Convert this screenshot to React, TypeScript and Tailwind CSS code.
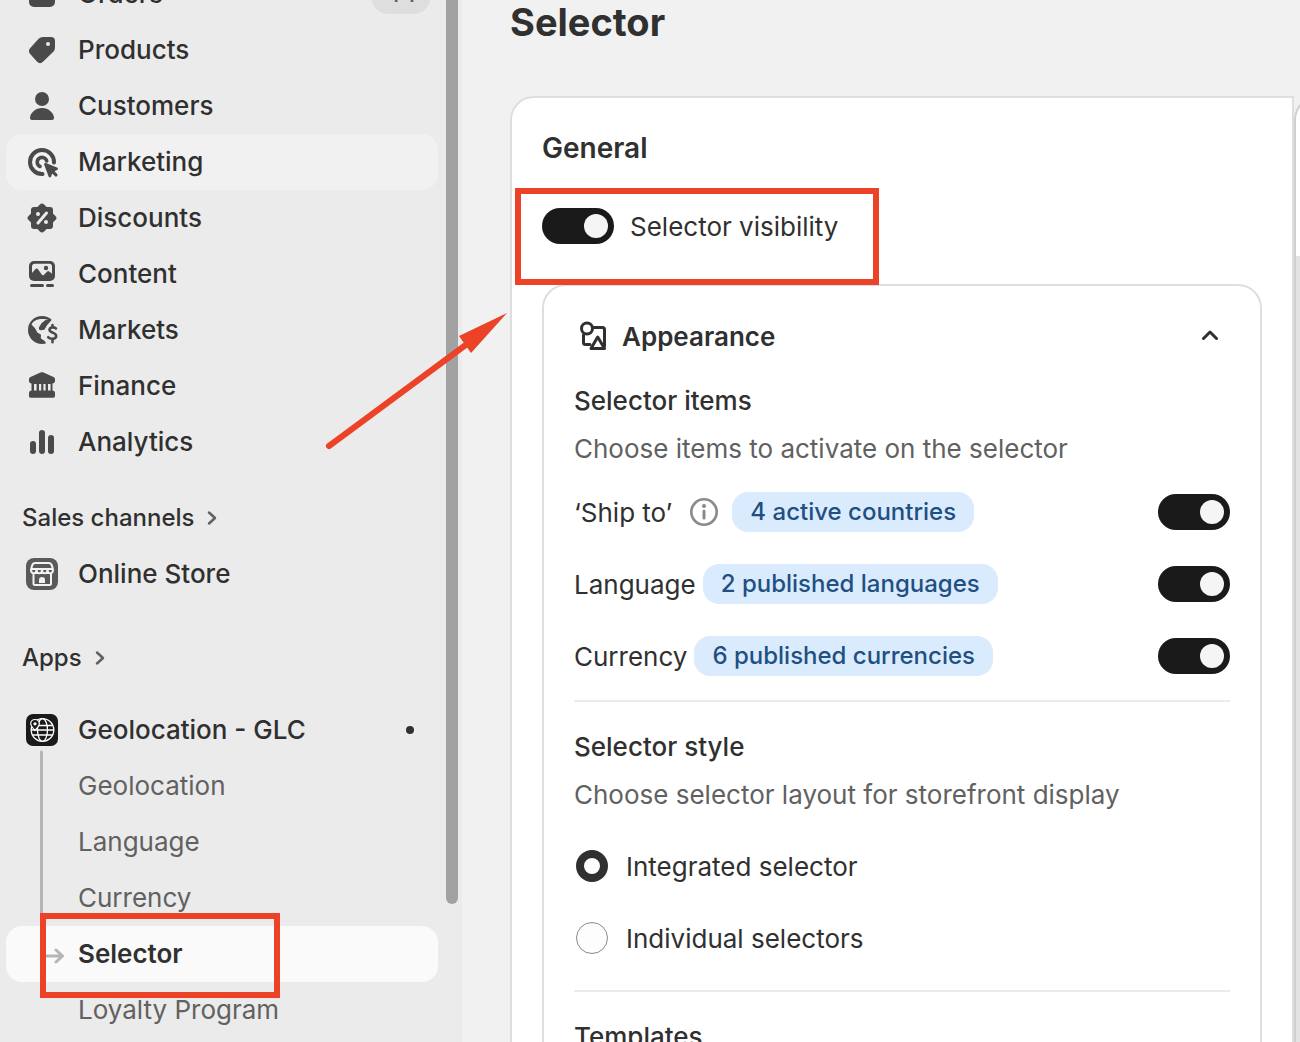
import { useState, type ReactNode } from "react";
import clsx from "clsx";

const icons: Record<string, ReactNode> = {
  orders: <rect x="7" y="7" width="26" height="26" rx="5" />,
  products: (
    <>
      <path d="M21 7h8a4 4 0 0 1 4 4v6.500c0 1.800-.7 3.400-2 4.600L21 31.700a4.200 4.200 0 0 1-5.900 0L8.200 24a4.200 4.200 0 0 1 .1-6l8.300-9.200A6.500 6.500 0 0 1 21 7Z" />
      <circle cx="26" cy="14" r="2" className="fill-[#ebebeb]" />
    </>
  ),
  customers: (
    <>
      <circle cx="20" cy="13" r="7" />
      <path d="M8 32c0-5 5.500-10 12-10s12 5 12 10c0 1.300-.8 2-2 2H10c-1.200 0-2-.7-2-2Z" />
    </>
  ),
  marketing: (
    <>
      <path d="M20.500 32A12 12 0 1 1 32 20.500" fill="none" stroke="currentColor" strokeWidth="4" strokeLinecap="round" />
      <path d="M18 24.500A4.800 4.800 0 1 1 24.700 19" fill="none" stroke="currentColor" strokeWidth="3.600" strokeLinecap="round" />
      <path d="M23.800 21 35 25.600c1.300.5 1.300 2 .1 2.500l-2.600 1.200 2.600 2.600a1.500 1.500 0 0 1-2.200 2.200l-2.700-2.600-1.100 3c-.5 1.400-2 1.400-2.500 0l-4.400-11.700c-.5-1.200.4-2.300 1.600-1.800Z" />
    </>
  ),
  discounts: (
    <>
      <rect x="9" y="9" width="22" height="22" rx="3" />
      <rect x="9" y="9" width="22" height="22" rx="3" transform="rotate(45 20 20)" />
      <path d="m16 25 8.500-10" className="stroke-[#ebebeb]" strokeWidth="3" strokeLinecap="round" />
      <circle cx="16" cy="16" r="2" className="fill-[#ebebeb]" />
      <circle cx="24" cy="24" r="2" className="fill-[#ebebeb]" />
    </>
  ),
  content: (
    <>
      <rect x="7" y="7" width="26" height="20" rx="5" />
      <path d="M10 12.500c0-1.600 1-2.800 2.700-2.800h14.600c1.700 0 2.700 1.200 2.700 2.800v7.200l-2.400-1.900c-.8-.6-1.800-.6-2.600 0L21.800 21c-.9.600-1.500.4-2.100-.4l-3.500-5.200c-.8-1.200-2.200-1.200-3.100 0L10 19Z" className="fill-[#ebebeb]" />
      <circle cx="24" cy="14" r="2.200" />
      <rect x="8" y="30" width="14" height="3" rx="1.500" />
      <rect x="24" y="30" width="8" height="3" rx="1.500" />
    </>
  ),
  markets: (
    <>
      <circle cx="20" cy="20" r="14" />
      <path d="M9.500 14.500C11 11.200 15 9 19.500 9c2.600-.2 5 .2 6.500 1l-6 3.500-3 4c-.5 1.500.5 3 2.200 2.700l3.300-.7 2.500-4.500L30 9.500 38 15l-2 20H23.500c.8-1.500.2-3.500-1.500-4.500l-3-2c-.8-1 .8-3-.5-4.200l-3-1.600-2.500-4.500Z" className="fill-[#ebebeb]" />
      <path d="M23.500 10 29 10.500l-4.500 5-2.500 4h-3.500c-1.400-.3-1.800-1.500-1-2.800l2-3.500Z" />
      <path d="M34 18.500c-1-1.500-6.500-1.700-6.500 1.300 0 3.200 6.700 2.500 6.700 6.200 0 3.400-6.200 3.600-8 1.200M30.500 15v2.500M30.500 29.500v2.700" fill="none" stroke="currentColor" strokeWidth="2.600" strokeLinecap="round" />
    </>
  ),
  finance: (
    <>
      <path d="M18.500 6.500c1-.5 2-.5 3 0l10 4.600c1 .5 1.500 1.200 1.500 2.200V15c0 1.500-1 2.500-2.500 2.500v7c1.500 0 2.500 1 2.500 2.500v3c0 1-.7 1.700-1.700 1.700H8.700c-1 0-1.700-.7-1.700-1.700v-3c0-1.500 1-2.500 2.500-2.500v-7C8 17.500 7 16.500 7 15v-1.700c0-1 .5-1.700 1.500-2.200Z" />
      <path d="M12 18h2.600v6.500H12zM17 18h2.200v6.500H17zM21.400 18h2.200v6.500h-2.200zM26 18h2.600v6.500H26z" className="fill-[#ebebeb]" />
    </>
  ),
  analytics: (
    <>
      <rect x="8" y="19" width="6" height="13" rx="3" />
      <rect x="17" y="8" width="6" height="24" rx="3" />
      <rect x="26" y="13" width="6" height="19" rx="3" />
    </>
  ),
  store: (
    <>
      <rect x="4" y="4" width="32" height="32" rx="8" className="fill-[#5a5a5a]" />
      <g fill="none" className="stroke-[#f3f3f3]" strokeWidth="2" strokeLinejoin="round">
        <path d="M13 9h14c1.500 0 2.300.8 2.800 2.200L31 15.500c0 5-5.500 5-5.500 0 0 5-5.500 5-5.500 0 0 5-5.500 5-5.500 0 0 5-5.500 5-5.500 0l1.200-4.300C10.700 9.800 11.500 9 13 9ZM10 15h21M11.500 20v9.500c0 1 .7 1.500 1.500 1.500h14.500c1 0 1.500-.5 1.500-1.500V20" />
      </g>
      <path d="M17 31v-5.500c0-3.300 6-3.300 6 0V31Z" className="fill-[#f3f3f3]" />
      <path d="M14 29.500h12" className="stroke-[#5a5a5a]" strokeWidth="1" />
    </>
  ),
  glc: (
    <>
      <rect x="4" y="4" width="32" height="32" rx="7" className="fill-[#1a1a1a]" />
      <g fill="none" stroke="#fff" strokeWidth="1.300">
        <circle cx="20.500" cy="20" r="11.300" />
        <ellipse cx="20.500" cy="20" rx="5" ry="11.300" />
        <path d="M10.500 15.500h20M10.500 25h20M9 20h23" />
      </g>
      <path d="M13 9.500a4.300 4.300 0 0 1 4.300 4.300c0 2.600-2.300 4.200-4.300 6.700-2-2.500-4.300-4.100-4.300-6.700A4.300 4.300 0 0 1 13 9.500Z" className="fill-[#1a1a1a]" stroke="#fff" strokeWidth="1.200" />
      <circle cx="13" cy="13.800" r="1.600" fill="#fff" />
    </>
  ),
};

const mainItems = [
  { icon: "orders", label: "Orders", count: 44 },
  { icon: "products", label: "Products" },
  { icon: "customers", label: "Customers" },
  { icon: "marketing", label: "Marketing", hovered: true },
  { icon: "discounts", label: "Discounts" },
  { icon: "content", label: "Content" },
  { icon: "markets", label: "Markets" },
  { icon: "finance", label: "Finance" },
  { icon: "analytics", label: "Analytics" },
];

const appItems = ["Geolocation", "Language", "Currency", "Selector", "Loyalty Program"];

interface NavItemProps {
  icon: string;
  label: string;
  count?: number;
  hovered?: boolean;
  children?: ReactNode;
}

function NavItem({ icon, label, count, hovered = false, children }: NavItemProps) {
  return (
    <a
      href="#"
      className={clsx("flex h-14 items-center gap-4 rounded-2xl pl-4 font-medium", hovered && "bg-[#f1f1f1]")}
    >
      <svg viewBox="0 0 40 40" className="size-10 shrink-0 fill-current text-[#4a4a4a]" aria-hidden="true">
        {icons[icon]}
      </svg>
      <span className="flex-1">{label}</span>
      {count && (
        <span className="mr-2 flex h-10 w-[58px] items-center justify-center rounded-2xl bg-[#dedede] text-2xl text-[#616161]">
          {count}
        </span>
      )}
      {children}
    </a>
  );
}

function SectionLink({ label }: { label: string }) {
  return (
    <a href="#" className="flex h-14 items-center gap-3 pl-4 text-2xl font-medium">
      {label}
      <svg viewBox="0 0 12 16" className="h-4 w-3" fill="none" stroke="#616161" strokeWidth="2.500" strokeLinecap="round" strokeLinejoin="round" aria-hidden="true">
        <path d="m3 2.500 6 5.500-6 5.500" />
      </svg>
    </a>
  );
}

function Sidebar() {
  return (
    <aside className="flex w-[462px] shrink-0 items-start gap-2 bg-[#ebebeb] pr-1 pl-1.5">
      <nav className="-mt-[34px] flex-1">
        {mainItems.map((item) => (
          <NavItem key={item.label} {...item} />
        ))}

        {/* Sales channels */}
        <div className="mt-5">
          <SectionLink label="Sales channels" />
          <NavItem icon="store" label="Online Store" />
        </div>

        {/* Apps */}
        <div className="mt-7">
          <SectionLink label="Apps" />
          <div className="relative mt-4">
            <NavItem icon="glc" label="Geolocation - GLC">
              <span className="mr-6 size-2 rounded-full bg-[#303030]" />
            </NavItem>
            {appItems.map((label) => (
              <a
                key={label}
                href="#"
                className={clsx(
                  "flex h-14 items-center rounded-2xl pl-[72px]",
                  label === "Selector" ? "bg-[#fafafa] font-semibold" : "text-[#616161]",
                )}
              >
                {label}
              </a>
            ))}
            {/* Branch from the app icon to the current page */}
            <svg className="absolute top-12 left-8 h-[220px] w-8" fill="none" stroke="#b5b5b5" strokeWidth="3" strokeLinecap="round" strokeLinejoin="round" aria-hidden="true">
              <path d="M3.500 2v200a4 4 0 0 0 4 4H24M18 200l6.500 6-6.500 6" />
            </svg>
            <div className="absolute top-[211px] left-[34px] h-[85px] w-60 border-6 border-[#eb4228]" />
          </div>
        </div>
      </nav>
      <div className="h-[904px] w-3 rounded-b-full bg-[#a2a2a2]" />
    </aside>
  );
}

function Toggle({ id }: { id: string }) {
  const [on, setOn] = useState(true);
  return (
    <input
      id={id}
      type="checkbox"
      role="switch"
      checked={on}
      onChange={() => setOn(!on)}
      className="flex h-9 w-[72px] shrink-0 appearance-none items-center rounded-full bg-[#8a8a8a] px-1.5 before:size-6 before:rounded-full before:bg-[#f5f5f5] checked:justify-end checked:bg-[#1a1a1a]"
    />
  );
}

interface ItemRowProps {
  id: string;
  label: string;
  badge: string;
  info?: boolean;
}

function ItemRow({ id, label, badge, info = false }: ItemRowProps) {
  return (
    <div className="flex h-[72px] items-center">
      <label htmlFor={id} className="pt-0.5">{label}</label>
      {info && (
        <svg viewBox="0 0 28 28" className="mr-[7px] ml-[18px] size-7" fill="none" stroke="#8a8a8a" aria-hidden="true">
          <circle cx="14" cy="14" r="12.700" strokeWidth="2.600" />
          <path d="M14 13v7" strokeWidth="3" strokeLinecap="round" />
          <circle cx="14" cy="8" r="2" fill="#8a8a8a" stroke="none" />
        </svg>
      )}
      <span className="mr-auto ml-[7px] flex h-10 items-center rounded-2xl bg-[#dbebfe] px-[18px] text-2xl font-medium text-[#1f5082]">
        {badge}
      </span>
      <Toggle id={id} />
    </div>
  );
}

function AppearanceCard() {
  const [layout, setLayout] = useState("Integrated selector");

  return (
    <section className="mt-10 rounded-3xl border-2 border-[#dedede] px-[30px] py-[30px]">
      <div className="flex h-10 items-center">
        <svg viewBox="0 0 40 40" className="size-10" fill="none" stroke="#303030" strokeWidth="3" strokeLinejoin="round" strokeLinecap="round" aria-hidden="true">
          <circle cx="13" cy="12.500" r="5.500" />
          <path d="M20 11.500h8.500a2 2 0 0 1 2 2V30M9.500 19v7.500a2 2 0 0 0 2 2h4.500" />
          <path d="M17 32.500h13.500L23.700 21Z" />
        </svg>
        <h3 className="ml-2 pt-0.5 font-semibold">Appearance</h3>
        <button type="button" aria-label="Collapse" className="ml-auto flex size-10 items-center justify-center">
          <svg viewBox="0 0 18 12" className="h-3 w-[18px]" fill="none" stroke="#303030" strokeWidth="3" strokeLinecap="round" strokeLinejoin="round">
            <path d="m2.500 8.500 6.500-6.500 6.500 6.500" />
          </svg>
        </button>
      </div>

      {/* Items */}
      <h4 className="mt-[25px] font-medium">Selector items</h4>
      <p className="mt-2 text-[#616161]">Choose items to activate on the selector</p>
      <div className="mt-[7px]">
        <ItemRow id="ship-to" label="‘Ship to’" badge="4 active countries" info />
        <ItemRow id="language" label="Language" badge="2 published languages" />
        <ItemRow id="currency" label="Currency" badge="6 published currencies" />
      </div>
      <hr className="mt-2 border-t-2 border-[#ebebeb]" />

      {/* Style */}
      <h4 className="mt-[25px] font-medium">Selector style</h4>
      <p className="mt-2 text-[#616161]">Choose selector layout for storefront display</p>
      <div className="mt-[15px]">
        {["Integrated selector", "Individual selectors"].map((option) => (
          <label key={option} className="flex h-[72px] items-center">
            <input
              type="radio"
              name="layout"
              checked={layout === option}
              onChange={() => setLayout(option)}
              className="mr-[18px] ml-0.5 size-8 appearance-none rounded-full border border-[#8a8a8a] bg-[#fdfdfd] checked:border-8 checked:border-[#303030]"
            />
            <span className="pt-0.5">{option}</span>
          </label>
        ))}
      </div>
      <hr className="mt-4 border-t-2 border-[#ebebeb]" />

      <h4 className="mt-[25px] font-medium">Templates</h4>
    </section>
  );
}

export default function App() {
  return (
    <div className="relative flex h-screen overflow-hidden bg-[#f1f1f1] font-['Inter',sans-serif] text-[26px] leading-10 text-[#303030] [font-optical-sizing:none]">
      <Sidebar />

      <main className="min-w-0 flex-1 pl-12">
        <h1 className="text-[38px] leading-[44px] font-bold">Selector</h1>
        <div className="mt-[52px] flex">
          <section className="min-w-0 flex-1 rounded-tl-3xl border-2 border-[#dedede] bg-white p-[30px]">
            <h2 className="text-[28px] leading-10 font-semibold">General</h2>
            <div className="relative mt-10 flex h-9 items-center gap-4">
              <Toggle id="visibility" />
              <label htmlFor="visibility" className="pt-0.5">Selector visibility</label>
              <div className="absolute -top-5 -left-[27px] h-[97px] w-[364px] border-6 border-[#eb4228]" />
            </div>
            <AppearanceCard />
          </section>

          {/* Edge of the preview panel */}
          <div className="flex w-1.5 shrink-0 overflow-hidden">
            <div className="w-40 shrink-0 overflow-hidden rounded-tl-3xl border-t-2 border-l-2 border-[#cfcfcf] bg-white pt-[158px]">
              <div className="h-full bg-[#e3e3e3]" />
            </div>
          </div>
        </div>
      </main>

      {/* Pointer to the visibility switch */}
      <svg viewBox="0 0 184 140" className="pointer-events-none absolute top-[310px] left-[325px] h-[140px] w-[184px]" aria-hidden="true">
        <path d="M4 136 142 34" stroke="#eb4228" strokeWidth="6" strokeLinecap="round" />
        <path d="M182 3 146 43l-12-17Z" fill="#eb4228" />
      </svg>
    </div>
  );
}
